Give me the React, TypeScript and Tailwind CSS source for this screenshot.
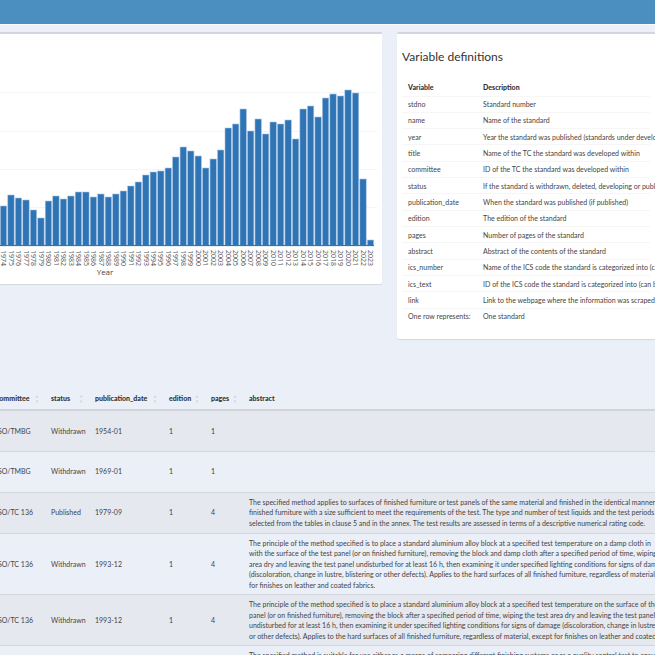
import clsx from "clsx";

// bar heights in px, 1974 to 2023
const FIRST_YEAR = 1974;
const counts = [
  40, 51, 48, 46, 36, 28, 45, 50, 47, 50, 54, 54, 49, 52, 49, 52, 55, 60, 64,
  71, 74, 75, 78, 89, 99, 95, 90, 78, 87, 96, 118, 122, 137, 115, 127, 112, 124,
  122, 126, 107, 137, 140, 129, 148, 152, 150, 156, 153, 67, 6,
];

const variables = [
  ["stdno", "Standard number"],
  ["name", "Name of the standard"],
  ["year", "Year the standard was published (standards under development)"],
  ["title", "Name of the TC the standard was developed within"],
  ["committee", "ID of the TC the standard was developed within"],
  ["status", "If the standard is withdrawn, deleted, developing or published"],
  ["publication_date", "When the standard was published (if published)"],
  ["edition", "The edition of the standard"],
  ["pages", "Number of pages of the standard"],
  ["abstract", "Abstract of the contents of the standard"],
  ["ics_number", "Name of the ICS code the standard is categorized into (can be"],
  ["ics_text", "ID of the ICS code the standard is categorized into (can be"],
  ["link", "Link to the webpage where the information was scraped"],
  ["One row represents:", "One standard"],
];

const columns = [
  { name: "committee", width: "w-[55px]", sortable: true },
  { name: "status", width: "w-[44px]", sortable: true },
  { name: "publication_date", width: "w-[74px]", sortable: true },
  { name: "edition", width: "w-[42px]", sortable: true },
  { name: "pages", width: "w-[38px]", sortable: true },
  { name: "abstract", width: "", sortable: false },
];

const standards = [
  { committee: "ISO/TMBG", status: "Withdrawn", date: "1954-01", edition: 1, pages: 1, abstract: [] },
  { committee: "ISO/TMBG", status: "Withdrawn", date: "1969-01", edition: 1, pages: 1, abstract: [] },
  {
    committee: "ISO/TC 136",
    status: "Published",
    date: "1979-09",
    edition: 1,
    pages: 4,
    abstract: [
      "The specified method applies to surfaces of finished furniture or test panels of the same material and finished in the identical manner",
      "finished furniture with a size sufficient to meet the requirements of the test. The type and number of test liquids and the test periods",
      "selected from the tables in clause 5 and in the annex. The test results are assessed in terms of a descriptive numerical rating code.",
    ],
  },
  {
    committee: "ISO/TC 136",
    status: "Withdrawn",
    date: "1993-12",
    edition: 1,
    pages: 4,
    abstract: [
      "The principle of the method specified is to place a standard aluminium alloy block at a specified test temperature on a damp cloth in",
      "with the surface of the test panel (or on finished furniture), removing the block and damp cloth after a specified period of time, wiping",
      "area dry and leaving the test panel undisturbed for at least 16 h, then examining it under specified lighting conditions for signs of damage",
      "(discoloration, change in lustre, blistering or other defects). Applies to the hard surfaces of all finished furniture, regardless of material",
      "for finishes on leather and coated fabrics.",
    ],
  },
  {
    committee: "ISO/TC 136",
    status: "Withdrawn",
    date: "1993-12",
    edition: 1,
    pages: 4,
    abstract: [
      "The principle of the method specified is to place a standard aluminium alloy block at a specified test temperature on the surface of the",
      "panel (or on finished furniture), removing the block after a specified period of time, wiping the test area dry and leaving the test panel",
      "undisturbed for at least 16 h, then examining it under specified lighting conditions for signs of damage (discoloration, change in lustre",
      "or other defects). Applies to the hard surfaces of all finished furniture, regardless of material, except for finishes on leather and coated",
    ],
  },
  {
    committee: "",
    status: "",
    date: "",
    edition: "",
    pages: "",
    abstract: [
      "The specified method is suitable for use either as a means of comparing different finishing systems or as a quality control test to ensure",
    ],
  },
];

function YearChart() {
  return (
    <svg width="377" height="250" role="img" aria-label="Standards per year" className="block">
      {[58, 97, 135, 173].map((y) => (
        <line key={y} x1="0" x2="377" y1={y + 0.5} y2={y + 0.5} stroke="#f3f4f5" />
      ))}
      {counts.map((h, i) => {
        const center = 3.5 + i * 7.49;
        return (
          <g key={i}>
            <rect
              x={center - 3.2}
              y={212 - h}
              width="6.4"
              height={h}
              fill="#2f75b5"
              stroke="#a9c4e4"
              strokeWidth="0.6"
            />
            <text
              transform={`translate(${center - 2.3} 216) rotate(90)`}
              fontSize="7"
              fontFamily="'Open Sans', sans-serif"
              fill="#555"
            >
              {FIRST_YEAR + i}
            </text>
          </g>
        );
      })}
      <line x1="0" x2="374" y1="211.5" y2="211.5" stroke="#3f6fa5" />
      <text x="105" y="241" fontSize="8" textAnchor="middle" fontFamily="'Open Sans', sans-serif" fill="#444">
        Year
      </text>
    </svg>
  );
}

function SortIcon() {
  return (
    <svg viewBox="0 0 4 8" className="h-2 w-1 shrink-0" fill="#d3d8df" aria-hidden="true">
      <path d="M2 0 3.7 2.4H.3zM2 8 .3 5.6h3.4z" />
    </svg>
  );
}

export default function App() {
  return (
    <div className="h-screen overflow-hidden bg-[#ebeff7] font-['Lato',sans-serif] text-[7px] leading-normal text-[#444]">
      <header className="h-6 bg-[#4a8fbf] shadow-[0_1px_1px_#f8fafc]" />

      <div className="flex items-start gap-[15px] pt-2">
        <section className="w-7/12 shrink-0 rounded-br-xs border-t-2 border-[#d2d6de] bg-white shadow-[0_1px_1px_rgba(0,0,0,0.1)]">
          <YearChart />
        </section>

        <section className="min-w-0 flex-1 overflow-hidden rounded-l-xs border-t-2 border-[#d2d6de] bg-white px-[5px] pt-[13px] pb-[15px] shadow-[0_1px_1px_rgba(0,0,0,0.1)]">
          <h2 className="text-[12px] leading-5 text-[#333]">Variable definitions</h2>
          <table className="mt-3 h-[245px] w-full table-fixed border-collapse whitespace-nowrap">
            <thead>
              <tr className="h-[17px] text-left text-[#333]">
                <th className="w-[75px] px-1.5 font-black">Variable</th>
                <th className="px-1.5 font-black">Description</th>
              </tr>
            </thead>
            <tbody>
              {variables.map(([name, description]) => (
                <tr key={name} className="border-t border-[#f6f6f6]">
                  <td className="px-1.5">{name}</td>
                  <td className="px-1.5">{description}</td>
                </tr>
              ))}
            </tbody>
          </table>
        </section>
      </div>

      <table className="mt-[49px] -ml-2 w-[calc(100%+8px)] table-fixed border-collapse whitespace-nowrap">
        <thead>
          <tr className="h-[22px] border-b-2 border-[#d0d4da] text-left text-[#333]">
            {columns.map((col) => (
              <th key={col.name} className={clsx("pr-2 pl-1 font-black", col.width)}>
                {col.sortable ? (
                  <button type="button" className="flex w-full items-center justify-between">
                    {col.name}
                    <SortIcon />
                  </button>
                ) : (
                  col.name
                )}
              </th>
            ))}
          </tr>
        </thead>
        <tbody>
          {standards.map((row, i) => (
            <tr key={i} className="h-[41px] border-b border-[#d3d7dd] odd:bg-[#e5e9ef]">
              <td className="p-1">{row.committee}</td>
              <td className="p-1">{row.status}</td>
              <td className="p-1">{row.date}</td>
              <td className="p-1">{row.edition}</td>
              <td className="p-1">{row.pages}</td>
              <td className={clsx("p-1", row.abstract.length === 1 && "align-top")}>
                {row.abstract.map((line, n) => (
                  <p key={n}>{line}</p>
                ))}
              </td>
            </tr>
          ))}
        </tbody>
      </table>
    </div>
  );
}
